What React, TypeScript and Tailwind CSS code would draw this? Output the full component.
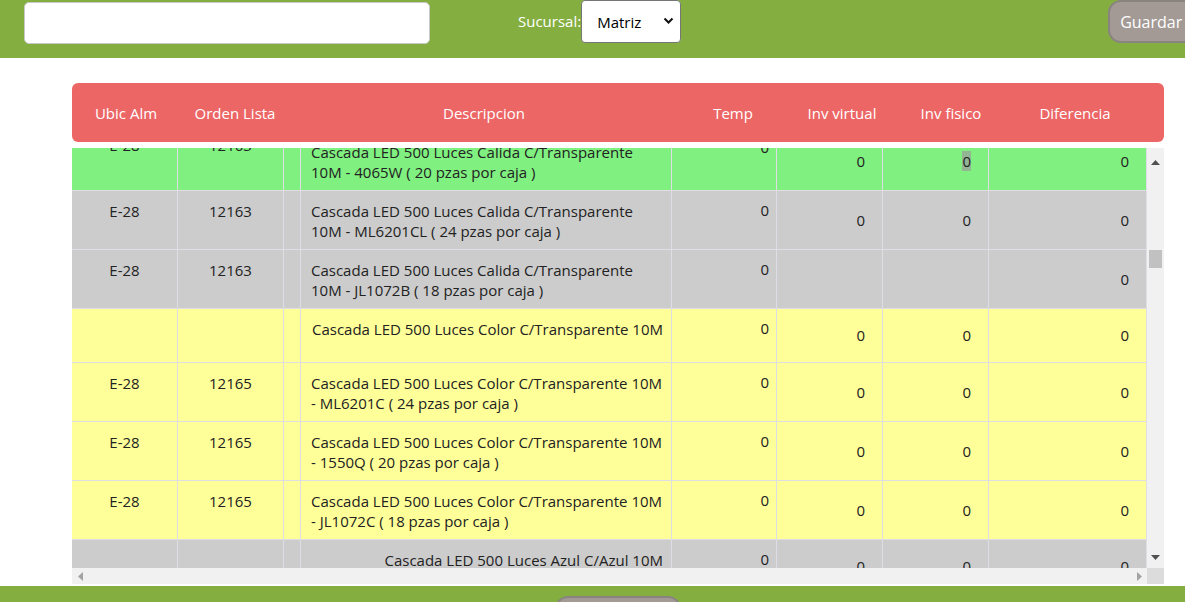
import React from 'react';

type Row = {
  bg: string;
  ubic: string;
  orden: string;
  desc: string[];
  group?: boolean;
  temp: string;
  virtual: string;
  fisico: string;
  dif: string;
  sel?: boolean;
  first?: boolean;
};

const rows: Row[] = [
  { bg: 'bg-[#80f080]', ubic: 'E-28', orden: '12163', desc: ['Cascada LED 500 Luces Calida C/Transparente', '10M - 4065W ( 20 pzas por caja )'], temp: '0', virtual: '0', fisico: '0', dif: '0', sel: true, first: true },
  { bg: 'bg-[#cccccc]', ubic: 'E-28', orden: '12163', desc: ['Cascada LED 500 Luces Calida C/Transparente', '10M - ML6201CL ( 24 pzas por caja )'], temp: '0', virtual: '0', fisico: '0', dif: '0' },
  { bg: 'bg-[#cccccc]', ubic: 'E-28', orden: '12163', desc: ['Cascada LED 500 Luces Calida C/Transparente', '10M - JL1072B ( 18 pzas por caja )'], temp: '0', virtual: '', fisico: '', dif: '0' },
  { bg: 'bg-[#ffff99]', ubic: '', orden: '', desc: ['Cascada LED 500 Luces Color C/Transparente 10M'], group: true, temp: '0', virtual: '0', fisico: '0', dif: '0' },
  { bg: 'bg-[#ffff99]', ubic: 'E-28', orden: '12165', desc: ['Cascada LED 500 Luces Color C/Transparente 10M', '- ML6201C ( 24 pzas por caja )'], temp: '0', virtual: '0', fisico: '0', dif: '0' },
  { bg: 'bg-[#ffff99]', ubic: 'E-28', orden: '12165', desc: ['Cascada LED 500 Luces Color C/Transparente 10M', '- 1550Q ( 20 pzas por caja )'], temp: '0', virtual: '0', fisico: '0', dif: '0' },
  { bg: 'bg-[#ffff99]', ubic: 'E-28', orden: '12165', desc: ['Cascada LED 500 Luces Color C/Transparente 10M', '- JL1072C ( 18 pzas por caja )'], temp: '0', virtual: '0', fisico: '0', dif: '0' },
  { bg: 'bg-[#cccccc]', ubic: '', orden: '', desc: ['Cascada LED 500 Luces Azul C/Azul 10M'], group: true, temp: '0', virtual: '0', fisico: '0', dif: '0' },
  { bg: 'bg-[#cccccc]', ubic: 'E-28', orden: '12166', desc: ['Cascada LED 500 Luces Azul C/Azul 10M', '- ML6201A ( 24 pzas por caja )'], temp: '0', virtual: '0', fisico: '0', dif: '0' },
];

const cols = 'grid grid-cols-[106px_106px_17px_371px_105px_106px_106px_158px]';
const cell = 'border-r border-[#dedee4]';

const InputCell = ({ value, sel }: { value: string; sel?: boolean }) => (
  <div className={`${cell} flex items-center justify-end pr-[17px]`}>
    <span className="h-[35px] leading-[35px]">
      {sel ? <span className="bg-[#93b593]">{value}</span> : value}
    </span>
  </div>
);

const TableRow = ({ r }: { r: Row }) => (
  <div className={`${cols} ${r.bg} border-b border-[#dedee4] ${r.desc.length > 1 ? 'h-[59px]' : 'h-[54px]'}`}>
    <div className={`${cell} ${r.first ? 'pt-[3px]' : 'pt-[10px]'} text-center`}>{r.ubic}</div>
    <div className={`${cell} ${r.first ? 'pt-[3px]' : 'pt-[10px]'} text-center`}>{r.orden}</div>
    <div className={cell}></div>
    <div className={`${cell} pt-[10px] ${r.group ? 'text-right pr-[8px]' : 'pl-[10px]'} whitespace-nowrap`}>
      {r.desc.map((l, i) => (
        <div key={i}>{l}</div>
      ))}
    </div>
    <div className={`${cell} ${r.first ? 'pt-[5px]' : 'pt-[9px]'} pr-[7px] text-right`}>{r.temp}</div>
    <InputCell value={r.virtual} />
    <InputCell value={r.fisico} sel={r.sel} />
    <InputCell value={r.dif} />
  </div>
);

export default function App() {
  return (
    <div className="min-h-screen bg-white text-[15px] leading-[20px] text-[#222]" style={{ fontFamily: '"Open Sans", "Noto Sans", sans-serif' }}>
      <div className="h-[58px] bg-[#84af40] flex items-start overflow-hidden">
        <input className="shrink-0 ml-[24px] mt-[2px] w-[406px] h-[42px] bg-white rounded-[5px] border border-[#c8c8c8]" />
        <span className="shrink-0 ml-[88px] mt-[11px] text-white text-[15px]">Sucursal:</span>
        <div className="shrink-0 relative w-[100px] h-[43px] bg-white border border-[#767676] rounded-[4px] flex items-center pl-[15px] text-[15px] text-black">
          Matriz
          <svg className="absolute right-[6px] top-[16px]" width="11" height="8" viewBox="0 0 11 8">
            <path d="M1.5 1.5 L5.5 5.5 L9.5 1.5" fill="none" stroke="#111" strokeWidth="2" />
          </svg>
        </div>
        <button className="ml-[427px] h-[43px] w-[140px] shrink-0 bg-[#a39a95] border-2 border-[#8a8480] rounded-[13px] text-white text-[16px] text-left pl-[10px] whitespace-nowrap">
          Guardar Inventario
        </button>
      </div>

      <div className="pl-[72px] pt-[25px]">
        <div className="w-[1092px] h-[59px] bg-[#ec6666] rounded-[6px] flex items-center text-white text-[15px]">
          <div className="w-[108px] text-center">Ubic Alm</div>
          <div className="w-[110px] text-center">Orden Lista</div>
          <div className="w-[17px]"></div>
          <div className="w-[354px] text-center">Descripcion</div>
          <div className="w-[144px] text-center">Temp</div>
          <div className="w-[74px] text-center">Inv virtual</div>
          <div className="w-[144px] text-center">Inv fisico</div>
          <div className="w-[104px] text-center">Diferencia</div>
        </div>

        <div className="mt-[6px] w-[1092px]">
          <div className="flex h-[420px]">
            <div className="w-[1075px] overflow-hidden">
              <div className="-mt-[16px]">
                {rows.map((r, i) => (
                  <TableRow key={i} r={r} />
                ))}
              </div>
            </div>
            <div className="w-[17px] bg-[#f1f1f1] relative">
              <svg className="absolute left-[4px] top-[12px]" width="9" height="5" viewBox="0 0 9 5">
                <path d="M0 5 L4.5 0 L9 5 Z" fill="#505050" />
              </svg>
              <div className="absolute left-[2px] top-[102px] w-[13px] h-[18px] bg-[#c1c1c1]"></div>
              <svg className="absolute left-[4px] top-[407px]" width="9" height="5" viewBox="0 0 9 5">
                <path d="M0 0 L4.5 5 L9 0 Z" fill="#505050" />
              </svg>
            </div>
          </div>
          <div className="flex h-[16px]">
            <div className="w-[1075px] bg-[#f1f1f1] relative">
              <svg className="absolute left-[6px] top-[4px]" width="5" height="9" viewBox="0 0 5 9">
                <path d="M5 0 L0 4.5 L5 9 Z" fill="#a3a3a3" />
              </svg>
              <svg className="absolute right-[5px] top-[4px]" width="5" height="9" viewBox="0 0 5 9">
                <path d="M0 0 L5 4.5 L0 9 Z" fill="#a3a3a3" />
              </svg>
            </div>
            <div className="w-[17px] bg-[#dcdcdc]"></div>
          </div>
        </div>
      </div>

      <div className="mt-[2px] h-[60px] bg-[#84af40] flex justify-center">
        <button className="mt-[10px] ml-[50px] w-[126px] h-[40px] bg-[#a39a95] border-2 border-[#8a8480] rounded-[13px] text-white text-[15px]">
          Guardar
        </button>
      </div>
    </div>
  );
}
